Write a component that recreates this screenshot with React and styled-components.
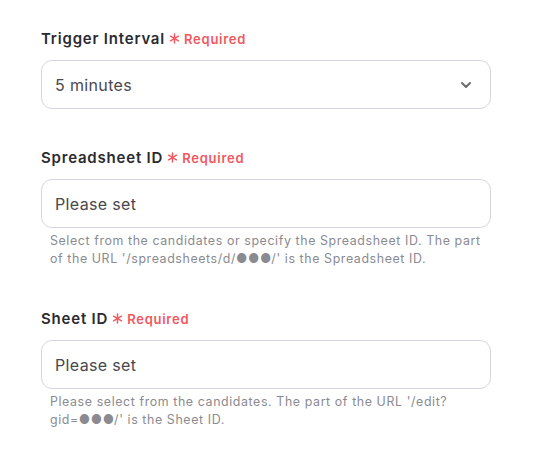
import React from "react";
import styled, { createGlobalStyle } from "styled-components";

const GlobalStyle = createGlobalStyle`
  body {
    margin: 0;
    background: #ffffff;
    font-family: Inter, "Noto Sans", sans-serif;
  }
`;

const Page = styled.div`
  width: 450px;
  padding: 28px 0 0 41px;
  display: flex;
  flex-direction: column;
  gap: 38px;
`;

const Field = styled.div`
  display: flex;
  flex-direction: column;
`;

const LabelRow = styled.div`
  display: flex;
  align-items: center;
  gap: 4px;
  height: 20px;
  margin-bottom: 12px;
`;

const Label = styled.span`
  font-size: 15px;
  font-weight: 600;
  color: #2b2b2f;
  letter-spacing: 0.8px;
`;

const Required = styled.span`
  display: flex;
  align-items: center;
  gap: 4px;
  color: #f2575f;
  font-size: 13px;
  font-weight: 600;
  letter-spacing: 0.75px;
  margin-top: 1px;
`;

const Box = styled.div`
  box-sizing: border-box;
  height: 49px;
  border: 1px solid #d5d7dd;
  border-radius: 11px;
  display: flex;
  align-items: center;
  justify-content: space-between;
  padding: 0 18px 0 13px;
  font-size: 16px;
  color: #48484e;
  letter-spacing: 0.35px;
`;

const Help = styled.p`
  margin: 4px 0 2px 9px;
  font-size: 12.4px;
  line-height: 18px;
  color: #8a8a90;
  letter-spacing: 0.6px;
`;

const Star = () => (
  <svg width="11" height="11" viewBox="0 0 12 12">
    <g stroke="#f2575f" strokeWidth="1.6" strokeLinecap="round">
      <line x1="6" y1="1" x2="6" y2="11" />
      <line x1="1.7" y1="3.5" x2="10.3" y2="8.5" />
      <line x1="1.7" y1="8.5" x2="10.3" y2="3.5" />
    </g>
  </svg>
);

const Chevron = () => (
  <svg width="12" height="12" viewBox="0 0 12 12">
    <path d="M2 4 L6 8 L10 4" fill="none" stroke="#6b6b70" strokeWidth="2" strokeLinecap="round" strokeLinejoin="round" />
  </svg>
);

const FieldLabel = ({ children }) => (
  <LabelRow>
    <Label>{children}</Label>
    <Required>
      <Star />
      Required
    </Required>
  </LabelRow>
);

export default function App() {
  return (
    <>
      <GlobalStyle />
      <Page>
        <Field>
          <FieldLabel>Trigger Interval</FieldLabel>
          <Box>
            5 minutes
            <Chevron />
          </Box>
        </Field>
        <Field>
          <FieldLabel>Spreadsheet ID</FieldLabel>
          <Box>Please set</Box>
          <Help>
            Select from the candidates or specify the Spreadsheet ID. The part
            of the URL '/spreadsheets/d/●●●/' is the Spreadsheet ID.
          </Help>
        </Field>
        <Field>
          <FieldLabel>Sheet ID</FieldLabel>
          <Box>Please set</Box>
          <Help>
            Please select from the candidates. The part of the URL '/edit?
            gid=●●●/' is the Sheet ID.
          </Help>
        </Field>
      </Page>
    </>
  );
}
